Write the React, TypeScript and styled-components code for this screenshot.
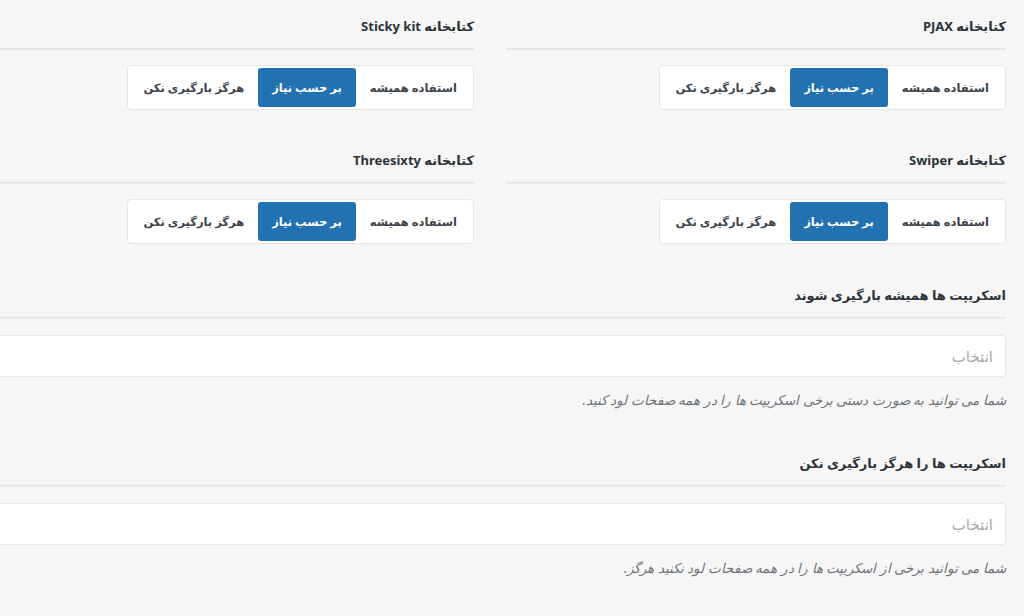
import React from "react"
import styled, { createGlobalStyle } from "styled-components"

const GlobalStyle = createGlobalStyle`
  html, body {
    margin: 0;
    padding: 0;
    background: #f6f6f6;
    overflow: hidden;
  }
  body {
    font-family: "Noto Sans", "DejaVu Sans", sans-serif;
    color: #23282d;
  }
`

const Page = styled.div`
  direction: rtl;
  width: 1032px;
  margin-right: 18px;
  margin-left: -26px;
  padding-top: 16px;
`

const Grid = styled.div`
  display: grid;
  grid-template-columns: 500px 500px;
  column-gap: 32px;
  row-gap: 40px;
`

const Field = styled.section<{ $wide?: boolean }>`
  grid-column: ${p => (p.$wide ? "1 / -1" : "auto")};
  display: flex;
  flex-direction: column;
  margin-top: ${p => (p.$wide ? "1px" : "0")};
`

const Title = styled.h3`
  margin: 0;
  font-size: 13px;
  line-height: 20px;
  font-weight: 700;
  color: #2c3338;
  padding-bottom: 12px;
  border-bottom: 1px solid #e3e3e3;
  box-shadow: 0 1px 0 #ececec;
`

const Segmented = styled.div`
  margin-top: 16px;
  align-self: flex-start;
  display: flex;
  padding: 2px;
  background: #fff;
  border: 1px solid #e6e6e6;
  border-radius: 4px;
`

const Segment = styled.button<{ $active?: boolean }>`
  height: 39px;
  padding: 0 14px;
  border: 0;
  border-radius: 3px;
  font-family: inherit;
  font-size: 11.5px;
  font-weight: 700;
  cursor: pointer;
  background: ${p => (p.$active ? "#2271b1" : "transparent")};
  color: ${p => (p.$active ? "#fff" : "#3c434a")};
`

const Select = styled.div`
  margin-top: 17px;
  height: 42px;
  box-sizing: border-box;
  background: #fff;
  border: 1px solid #e6e6e6;
  border-radius: 4px;
  padding: 0 12px;
  display: flex;
  align-items: center;
  font-size: 15px;
  color: #a7aaad;
`

const Help = styled.p`
  margin: 13px 0 2px;
  font-size: 13.5px;
  line-height: 20px;
  font-style: italic;
  color: #6f7479;
`

const options = ["استفاده همیشه", "بر حسب نیاز", "هرگز بارگیری نکن"]

const Library = ({ name }: { name: string }) => (
  <Field>
    <Title>{`کتابخانه ${name}`}</Title>
    <Segmented>
      {options.map((o, i) => (
        <Segment key={o} $active={i === 1}>{o}</Segment>
      ))}
    </Segmented>
  </Field>
)

const ScriptPicker = ({ title, help }: { title: string; help: string }) => (
  <Field $wide>
    <Title>{title}</Title>
    <Select>انتخاب</Select>
    <Help>{help}</Help>
  </Field>
)

export default function App() {
  return (
    <>
      <GlobalStyle />
      <Page>
        <Grid>
          <Library name="PJAX" />
          <Library name="Sticky kit" />
          <Library name="Swiper" />
          <Library name="Threesixty" />
          <ScriptPicker
            title="اسکریپت ها همیشه بارگیری شوند"
            help="شما می توانید به صورت دستی برخی اسکریپت ها را در همه صفحات لود کنید."
          />
          <ScriptPicker
            title="اسکریپت ها را هرگز بارگیری نکن"
            help="شما می توانید برخی از اسکریپت ها را در همه صفحات لود نکنید هرگز."
          />
        </Grid>
      </Page>
    </>
  )
}
